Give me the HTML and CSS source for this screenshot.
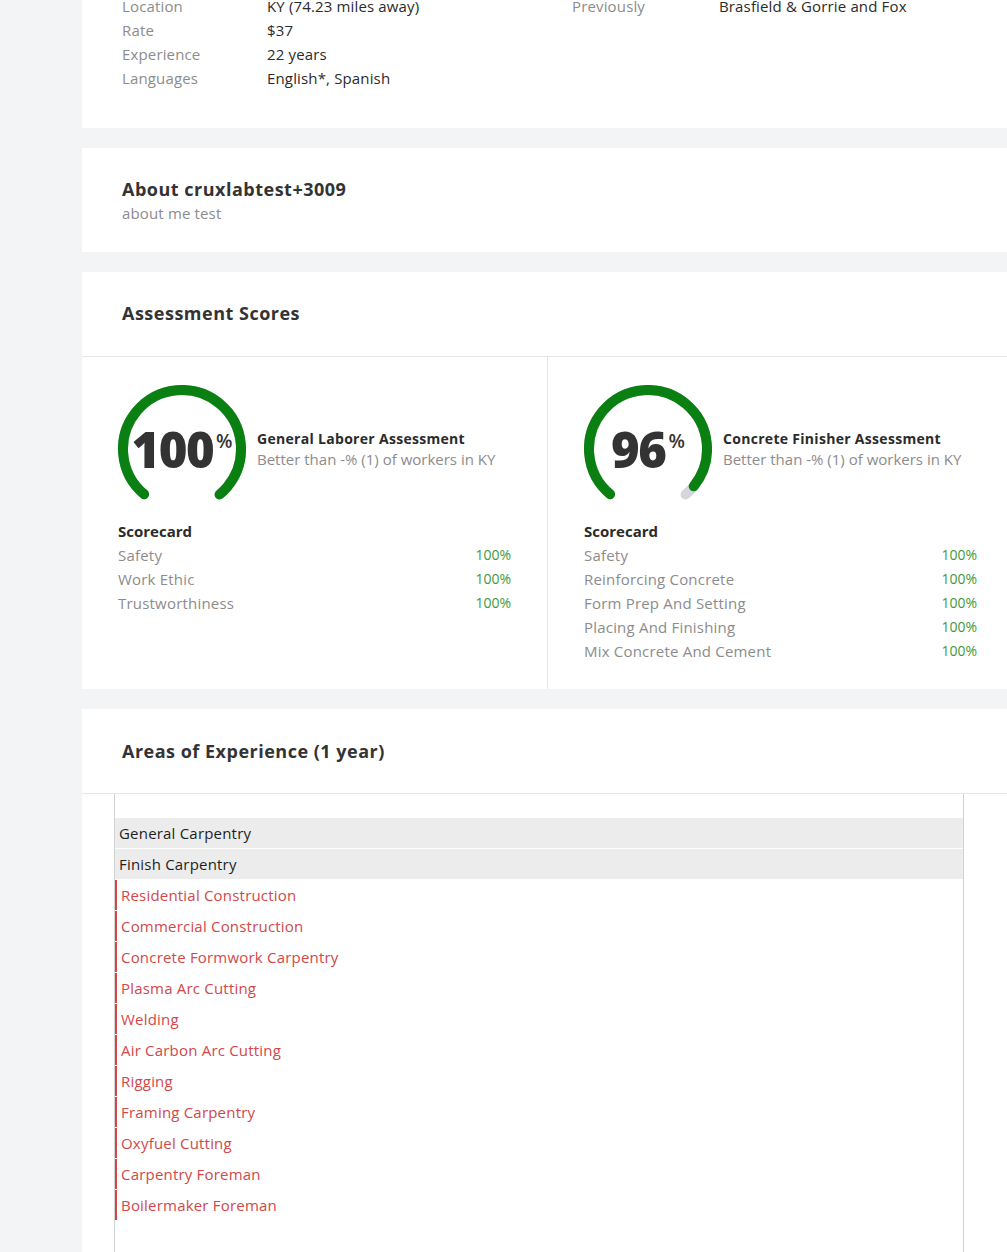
FILE: index.html
```html
<!DOCTYPE html>
<html lang="en">
<head>
<meta charset="utf-8">
<title>Profile</title>
<link rel="stylesheet" href="styles.css">
</head>
<body>
<div class="page">
  <aside class="sidebar"></aside>
  <main class="main">
    <section class="card card-info">
      <div class="info-col">
        <div class="info-row"><span class="info-label">Location</span><span class="info-value">KY (74.23 miles away)</span></div>
        <div class="info-row"><span class="info-label">Rate</span><span class="info-value">$37</span></div>
        <div class="info-row"><span class="info-label">Experience</span><span class="info-value">22 years</span></div>
        <div class="info-row"><span class="info-label">Languages</span><span class="info-value">English*, Spanish</span></div>
      </div>
      <div class="info-col info-col-right">
        <div class="info-row"><span class="info-label">Previously</span><span class="info-value">Brasfield &amp; Gorrie and Fox</span></div>
      </div>
    </section>

    <section class="card card-about">
      <h2 class="card-title">About cruxlabtest+3009</h2>
      <p class="about-text">about me test</p>
    </section>

    <section class="card">
      <header class="card-header"><h2 class="card-title">Assessment Scores</h2></header>
      <div class="scores">
        <div class="score-col">
          <div class="score-top">
            <div class="gauge">
              <svg class="gauge-svg" width="128" height="128" viewBox="0 0 128 128">
                <circle class="gauge-track" cx="64" cy="64" r="59" transform="rotate(130 64 64)" stroke-dasharray="288.33 400"/>
                <circle class="gauge-fill" cx="64" cy="64" r="59" transform="rotate(130 64 64)" stroke-dasharray="288.33 400"/>
              </svg>
              <div class="gauge-num">100<span class="gauge-pct">%</span></div>
            </div>
            <div class="score-meta">
              <div class="score-name">General Laborer Assessment</div>
              <div class="score-sub">Better than -% (1) of workers in KY</div>
            </div>
          </div>
          <div class="scorecard">
            <div class="scorecard-title">Scorecard</div>
            <div class="sc-row"><span>Safety</span><span class="sc-val">100%</span></div>
            <div class="sc-row"><span>Work Ethic</span><span class="sc-val">100%</span></div>
            <div class="sc-row"><span>Trustworthiness</span><span class="sc-val">100%</span></div>
          </div>
        </div>
        <div class="score-col">
          <div class="score-top">
            <div class="gauge">
              <svg class="gauge-svg" width="128" height="128" viewBox="0 0 128 128">
                <circle class="gauge-track" cx="64" cy="64" r="59" transform="rotate(130 64 64)" stroke-dasharray="288.33 400"/>
                <circle class="gauge-fill" cx="64" cy="64" r="59" transform="rotate(130 64 64)" stroke-dasharray="276.8 400"/>
              </svg>
              <div class="gauge-num">96<span class="gauge-pct">%</span></div>
            </div>
            <div class="score-meta">
              <div class="score-name">Concrete Finisher Assessment</div>
              <div class="score-sub">Better than -% (1) of workers in KY</div>
            </div>
          </div>
          <div class="scorecard">
            <div class="scorecard-title">Scorecard</div>
            <div class="sc-row"><span>Safety</span><span class="sc-val">100%</span></div>
            <div class="sc-row"><span>Reinforcing Concrete</span><span class="sc-val">100%</span></div>
            <div class="sc-row"><span>Form Prep And Setting</span><span class="sc-val">100%</span></div>
            <div class="sc-row"><span>Placing And Finishing</span><span class="sc-val">100%</span></div>
            <div class="sc-row"><span>Mix Concrete And Cement</span><span class="sc-val">100%</span></div>
          </div>
        </div>
      </div>
    </section>

    <section class="card card-areas">
      <header class="card-header card-header-areas"><h2 class="card-title">Areas of Experience (1 year)</h2></header>
      <div class="areas-box">
        <div class="area area-main">General Carpentry</div>
        <div class="area area-main">Finish Carpentry</div>
        <div class="area area-red">Residential Construction</div>
        <div class="area area-red">Commercial Construction</div>
        <div class="area area-red">Concrete Formwork Carpentry</div>
        <div class="area area-red">Plasma Arc Cutting</div>
        <div class="area area-red">Welding</div>
        <div class="area area-red">Air Carbon Arc Cutting</div>
        <div class="area area-red">Rigging</div>
        <div class="area area-red">Framing Carpentry</div>
        <div class="area area-red">Oxyfuel Cutting</div>
        <div class="area area-red">Carpentry Foreman</div>
        <div class="area area-red">Boilermaker Foreman</div>
      </div>
    </section>
  </main>
</div>
</body>
</html>
```

FILE: styles.css
```css
html, body {
  margin: 0;
  padding: 0;
  overflow: hidden;
}
body {
  background: #f3f4f6;
  font-family: "Open Sans", "Liberation Sans", sans-serif;
  font-size: 15px;
  color: #333;
}
.page {
  display: flex;
  align-items: flex-start;
}
.sidebar {
  width: 82px;
  flex-shrink: 0;
}
.main {
  width: 932px;
  flex-shrink: 0;
  margin-top: -6px;
  display: flex;
  flex-direction: column;
  gap: 20px;
}
.card {
  background: #fff;
}
.card-title {
  margin: 0;
  font-size: 18px;
  line-height: 24px;
  font-weight: 700;
  letter-spacing: 0.5px;
  color: #333;
}

/* info card */
.card-info {
  display: grid;
  grid-template-columns: 450px 1fr;
  padding: 0 40px 38px;
}
.info-row {
  display: flex;
  line-height: 24px;
  letter-spacing: 0.15px;
}
.info-label {
  width: 145px;
  flex-shrink: 0;
  color: #8c8c8c;
}
.info-col-right .info-label {
  width: 147px;
}
.info-value {
  color: #2b2b2b;
}

/* about */
.card-about {
  padding: 29px 40px 27px;
}
.about-text {
  margin: 0;
  line-height: 24px;
  color: #8c8c8c;
  letter-spacing: 0.15px;
}

/* headers */
.card-header {
  padding: 29px 40px 31px;
  border-bottom: 1px solid #e6e6e6;
}
.card-header-areas {
  padding: 30px 40px 30px;
}

/* scores */
.scores {
  display: grid;
  grid-template-columns: 1fr 1fr;
}
.score-col {
  padding: 28px 37px 26px 36px;
}
.score-col:first-child {
  border-right: 1px solid #e6e6e6;
  padding-right: 36px;
}
.score-top {
  display: flex;
  align-items: center;
  gap: 11px;
}
.gauge {
  position: relative;
  width: 128px;
  height: 128px;
  flex-shrink: 0;
}
.gauge-svg {
  display: block;
}
.gauge-track,
.gauge-fill {
  fill: none;
  stroke-width: 10;
  stroke-linecap: round;
}
.gauge-track {
  stroke: #d4d6db;
}
.gauge-fill {
  stroke: #0a7f12;
}
.gauge-num {
  position: absolute;
  inset: 0;
  display: flex;
  align-items: center;
  justify-content: center;
  font-size: 49px;
  font-weight: 800;
  letter-spacing: -1.5px;
  color: #333;
  line-height: 1;
}
.gauge-pct {
  font-size: 19px;
  font-weight: 600;
  letter-spacing: 0;
  align-self: flex-start;
  margin-top: 47px;
  margin-left: 3px;
}
.score-meta {
  line-height: 20px;
}
.score-name {
  font-size: 14px;
  font-weight: 700;
  letter-spacing: 0.3px;
  color: #2b2b2b;
}
.score-sub {
  color: #8c8c8c;
}
.scorecard {
  margin-top: 6px;
}
.scorecard-title {
  font-weight: 700;
  line-height: 24px;
  color: #2b2b2b;
}
.sc-row {
  display: flex;
  justify-content: space-between;
  line-height: 24px;
  color: #8c8c8c;
  letter-spacing: 0.2px;
}
.sc-val {
  font-size: 14px;
  letter-spacing: 0;
  color: #3e9a3e;
}

/* areas */
.card-areas {
  height: 600px;
}
.areas-box {
  margin: 0 50px 0 32px;
  padding-top: 24px;
  border-left: 1px solid #d2d2d2;
  border-right: 1px solid #d2d2d2;
  height: 100%;
  display: flex;
  flex-direction: column;
  gap: 1px;
}
.area {
  height: 30px;
  line-height: 30px;
  flex-shrink: 0;
  letter-spacing: 0.2px;
}
.area-main {
  background: #ececec;
  color: #1e1e1e;
  padding-left: 4px;
}
.area-red {
  color: #d24848;
  border-left: 2px solid #d24848;
  padding-left: 4px;
}
```
